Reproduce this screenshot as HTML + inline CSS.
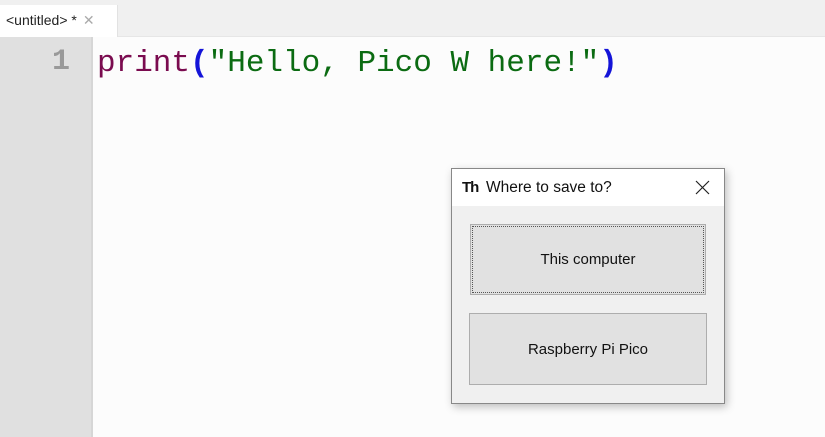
<!DOCTYPE html>
<html><head><meta charset="utf-8"><style>
body{margin:0;width:825px;height:437px;overflow:hidden;background:#fcfcfc;position:relative;font-family:"Liberation Sans",sans-serif}
.tabbar{position:absolute;left:0;top:0;width:825px;height:36px;background:#f0f0f0;border-bottom:1px solid #e6e6e6}
.tab{position:absolute;left:0;top:5px;width:118px;height:32px;background:#fff;border-right:1px solid #e2e2e2;font-size:14px;color:#222;line-height:30px;padding-left:6px;box-sizing:border-box}
.tab span{color:#aaa;margin-left:6px}
.gutter{position:absolute;left:0;top:37px;width:91px;height:400px;background:#e0e0e0;border-right:2px solid #d6d6d6}
.ln{position:absolute;left:52px;top:45px;font:bold 30px "Liberation Mono",monospace;color:#999}
.code{position:absolute;left:97px;top:45px;font:31px "Liberation Mono",monospace;white-space:pre;line-height:38px}
.dlg{position:absolute;left:451px;top:168px;width:272px;height:234px;background:#f0f0f0;border:1px solid #888;box-shadow:2px 3px 8px rgba(0,0,0,.25)}
.title{height:37px;background:#fff;font-size:15.5px;color:#111;line-height:38px;padding-left:34px;position:relative}
.btn{position:absolute;background:#e1e1e1;border:1px solid #adadad;font-size:15px;color:#111;display:flex;align-items:center;justify-content:center;box-sizing:border-box}
</style></head><body>
<div class="tabbar"><div class="tab">&lt;untitled&gt; *<span>✕</span></div></div>
<div class="gutter"></div>
<div class="ln">1</div>
<div class="code"><span style="color:#7a0b4f">print</span><span style="color:#1414d8;font-weight:bold">(</span><span style="color:#0b6b12">"Hello, Pico W here!"</span><span style="color:#1414d8;font-weight:bold">)</span></div>
<div class="dlg">
<div class="title"><span style="position:absolute;left:10px;top:0;font-weight:bold;font-size:15px;letter-spacing:-1px">Th</span>Where to save to?
<svg style="position:absolute;left:243px;top:11px" width="15" height="15"><path d="M1 1L14 14M14 1L1 14" stroke="#222" stroke-width="1.2"/></svg></div>
<div class="btn" style="left:18px;top:55px;width:236px;height:71px;outline:1px dotted #555;outline-offset:-3px">This computer</div>
<div class="btn" style="left:17px;top:144px;width:238px;height:72px">Raspberry Pi Pico</div>
</div>
</body></html>
